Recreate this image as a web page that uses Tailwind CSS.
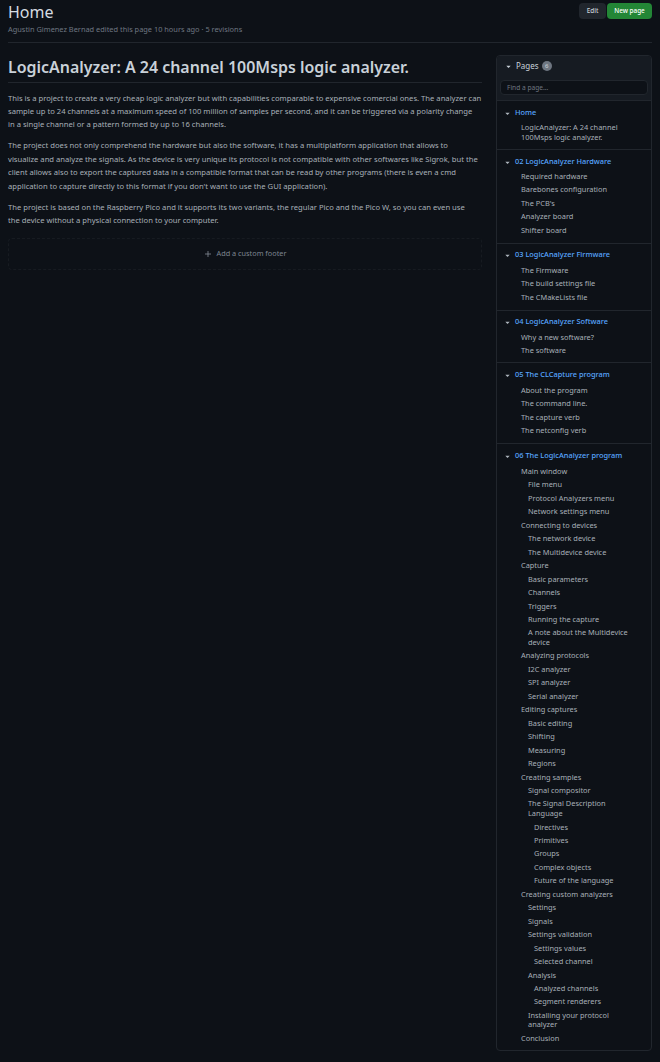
<!DOCTYPE html>
<html><head><meta charset="utf-8"><script src="https://cdn.jsdelivr.net/npm/@tailwindcss/browser@4"></script></head>
<body class="bg-[#0d1117] w-[660px] h-[1062px] overflow-hidden font-['Noto_Sans',sans-serif] text-[#c9d1d9]">
<div class="px-2 relative h-[1062px]">
<header class="flex justify-between h-[43px] border-b border-[#21262d] pr-0">
<div><h1 class="text-[16px] leading-[24px] text-[#d5dbe1] font-normal">Home</h1>
<p class="text-[7.4px] leading-[11px] mt-[0px] text-[#6e7681]">Agustin Gimenez Bernad edited this page 10 hours ago · 5 revisions</p></div>
<div class="flex gap-[1px] h-[16px] mt-[3px] text-[6.4px] font-medium">
<span class="w-[27px] flex items-center justify-center rounded-[4px] bg-[#21262d] text-[#c9d1d9]">Edit</span>
<span class="w-[45px] flex items-center justify-center rounded-[4px] bg-[#238636] text-white">New page</span></div>
</header>
<div class="flex justify-between mt-[12px]">
<main class="w-[474px]">
<h1 class="text-[15.95px] leading-[24px] font-semibold text-[#c9d1d9] border-b border-[#21262d] h-[28px]">LogicAnalyzer: A 24 channel 100Msps logic analyzer.</h1>
<div class="text-[7.65px] leading-[13.4px] text-[#a8b0b8] mt-[8.6px] whitespace-nowrap">
<p>This is a project to create a very cheap logic analyzer but with capabilities comparable to expensive comercial ones. The analyzer can<br>sample up to 24 channels at a maximum speed of 100 million of samples per second, and it can be triggered via a polarity change<br>in a single channel or a pattern formed by up to 16 channels.</p>
<p class="mt-[7.6px]">The project does not only comprehend the hardware but also the software, it has a multiplatform application that allows to<br>visualize and analyze the signals. As the device is very unique its protocol is not compatible with other softwares like Sigrok, but the<br>client allows also to export the captured data in a compatible format that can be read by other programs (there is even a cmd<br>application to capture directly to this format if you don't want to use the GUI application).</p>
<p class="mt-[7.6px]">The project is based on the Raspberry Pico and it supports its two variants, the regular Pico and the Pico W, so you can even use<br>the device without a physical connection to your computer.</p>
</div>
<div class="mt-[10.4px] h-[32px] border border-dashed border-[#171b21] rounded-[4px] flex items-center justify-center gap-[5px] text-[7.3px] text-[#7d8590]">
<svg width="8" height="8" viewBox="0 0 16 16" fill="none" stroke="#8b949e" stroke-width="1.5"><path d="M8 2v12M2 8h12"/></svg><span>Add a custom footer</span></div>
</main>
<aside class="w-[156px] mr-0 h-[996px] border border-[#21262d] rounded-[4px] text-[7.4px] text-[#a8b0b8] overflow-hidden">
<div class="bg-[#161b22] h-[45px] border-b border-[#21262d] px-[3px]">
<div class="flex items-center h-[23px] pb-[3px] pl-[5px] gap-[3px] text-[8px] text-[#c9d1d9]"><svg width="7" height="7" viewBox="0 0 8 8"><path d="M1.5 3h5L4 5.6z" fill="#c9d1d9"/></svg><span class="ml-[1px]">Pages</span><span class="w-[10px] h-[10px] rounded-full bg-[#6e7681] text-[6px] text-[#d0d7de] flex items-center justify-center">6</span></div>
<div class="h-[15px] mt-[1px] bg-[#0d1117] border border-[#21262d] rounded-[4px] pl-[6px] text-[6.6px] leading-[13px] text-[#6e7681]">Find a page...</div>
</div>
<section class="border-b border-[#21262d] pl-[6px] pt-[5px] pb-[6px] h-[49px]">
<div class="flex items-center h-[14px] gap-[4px] mb-[1px] pl-[1px]"><svg width="7" height="7" viewBox="0 0 8 8"><path d="M1.5 3h5L4 5.6z" fill="#aeb6be"/></svg><a class="text-[#58a6ff] font-medium">Home</a></div>
<div class="pl-[18px] py-[2px] leading-[9.6px]">LogicAnalyzer: A 24 channel<br>100Msps logic analyzer.</div></section>
<section class="border-b border-[#21262d] pl-[6px] pt-[5px] pb-[6px] h-[94px]">
<div class="flex items-center h-[14px] gap-[4px] mb-[1px] pl-[1px]"><svg width="7" height="7" viewBox="0 0 8 8"><path d="M1.5 3h5L4 5.6z" fill="#aeb6be"/></svg><a class="text-[#58a6ff] font-medium">02 LogicAnalyzer Hardware</a></div>
<div class="pl-[18px] leading-[13.4px]">Required hardware<br>Barebones configuration<br>The PCB's<br>Analyzer board<br>Shifter board</div></section>
<section class="border-b border-[#21262d] pl-[6px] pt-[4px] pb-[6px] h-[67px]">
<div class="flex items-center h-[14px] gap-[4px] mb-[2px] pl-[1px]"><svg width="7" height="7" viewBox="0 0 8 8"><path d="M1.5 3h5L4 5.6z" fill="#aeb6be"/></svg><a class="text-[#58a6ff] font-medium">03 LogicAnalyzer Firmware</a></div>
<div class="pl-[18px] leading-[13.4px]">The Firmware<br>The build settings file<br>The CMakeLists file</div></section>
<section class="border-b border-[#21262d] pl-[6px] pt-[4px] pb-[6px] h-[52px]">
<div class="flex items-center h-[14px] gap-[4px] mb-[2px] pl-[1px]"><svg width="7" height="7" viewBox="0 0 8 8"><path d="M1.5 3h5L4 5.6z" fill="#aeb6be"/></svg><a class="text-[#58a6ff] font-medium">04 LogicAnalyzer Software</a></div>
<div class="pl-[18px] leading-[13.4px]">Why a new software?<br>The software</div></section>
<section class="border-b border-[#21262d] pl-[6px] pt-[5px] pb-[6px] h-[81px]">
<div class="flex items-center h-[14px] gap-[4px] mb-[2px] pl-[1px]"><svg width="7" height="7" viewBox="0 0 8 8"><path d="M1.5 3h5L4 5.6z" fill="#aeb6be"/></svg><a class="text-[#58a6ff] font-medium">05 The CLCapture program</a></div>
<div class="pl-[18px] leading-[13.4px]">About the program<br>The command line.<br>The capture verb<br>The netconfig verb</div></section>
<section class="pl-[6px] pt-[5px]">
<div class="flex items-center h-[14px] gap-[4px] mb-[2px] pl-[1px]"><svg width="7" height="7" viewBox="0 0 8 8"><path d="M1.5 3h5L4 5.6z" fill="#aeb6be"/></svg><a class="text-[#58a6ff] font-medium">06 The LogicAnalyzer program</a></div>
<div class="pl-[18px] leading-[9.6px] flex flex-col gap-[3.87px] pt-[2px]">
<div>Main window</div>
<div class="pl-[7px]">File menu</div>
<div class="pl-[7px]">Protocol Analyzers menu</div>
<div class="pl-[7px]">Network settings menu</div>
<div>Connecting to devices</div>
<div class="pl-[7px]">The network device</div>
<div class="pl-[7px]">The Multidevice device</div>
<div>Capture</div>
<div class="pl-[7px]">Basic parameters</div>
<div class="pl-[7px]">Channels</div>
<div class="pl-[7px]">Triggers</div>
<div class="pl-[7px]">Running the capture</div>
<div class="pl-[7px]">A note about the Multidevice<br>device</div>
<div>Analyzing protocols</div>
<div class="pl-[7px]">I2C analyzer</div>
<div class="pl-[7px]">SPI analyzer</div>
<div class="pl-[7px]">Serial analyzer</div>
<div>Editing captures</div>
<div class="pl-[7px]">Basic editing</div>
<div class="pl-[7px]">Shifting</div>
<div class="pl-[7px]">Measuring</div>
<div class="pl-[7px]">Regions</div>
<div>Creating samples</div>
<div class="pl-[7px]">Signal compositor</div>
<div class="pl-[7px]">The Signal Description<br>Language</div>
<div class="pl-[13px]">Directives</div>
<div class="pl-[13px]">Primitives</div>
<div class="pl-[13px]">Groups</div>
<div class="pl-[13px]">Complex objects</div>
<div class="pl-[13px]">Future of the language</div>
<div>Creating custom analyzers</div>
<div class="pl-[7px]">Settings</div>
<div class="pl-[7px]">Signals</div>
<div class="pl-[7px]">Settings validation</div>
<div class="pl-[13px]">Settings values</div>
<div class="pl-[13px]">Selected channel</div>
<div class="pl-[7px]">Analysis</div>
<div class="pl-[13px]">Analyzed channels</div>
<div class="pl-[13px]">Segment renderers</div>
<div class="pl-[7px]">Installing your protocol<br>analyzer</div>
<div>Conclusion</div>
</div></section>
</aside>
</div></div>
</body></html>
